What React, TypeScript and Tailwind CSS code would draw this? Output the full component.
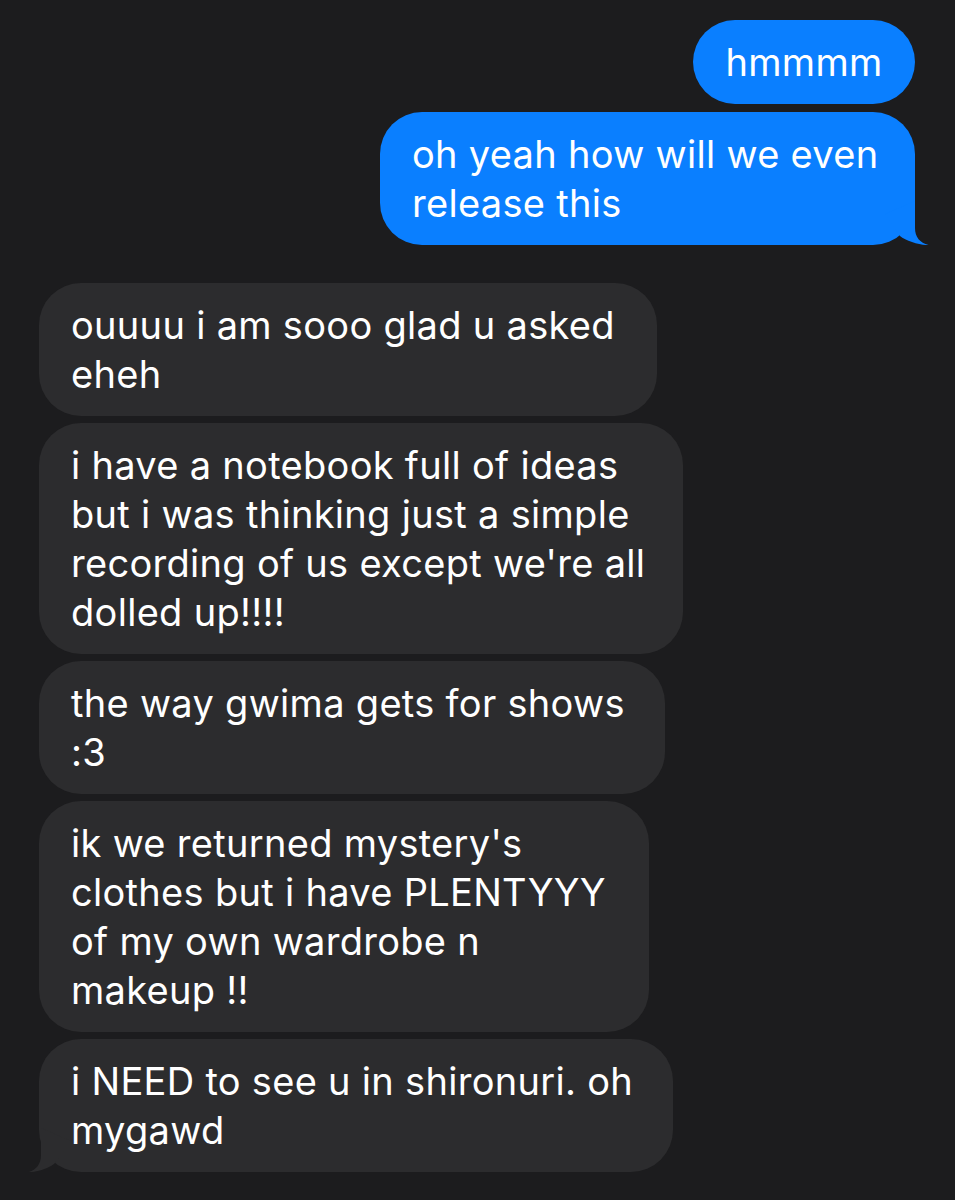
const BLUE = "#0a7fff";

type Msg = { lines: string[]; w: string; tail?: boolean };

const sent: Msg[] = [
  { lines: ["hmmmm"], w: "w-[222px]" },
  { lines: ["oh yeah how will we even", "release this"], w: "w-[535px]", tail: true },
];

const received: Msg[] = [
  { lines: ["ouuuu i am sooo glad u asked", "eheh"], w: "w-[618px]" },
  {
    lines: [
      "i have a notebook full of ideas",
      "but i was thinking just a simple",
      "recording of us except we're all",
      "dolled up!!!!",
    ],
    w: "w-[644px]",
  },
  { lines: ["the way gwima gets for shows", ":3"], w: "w-[626px]" },
  {
    lines: [
      "ik we returned mystery's",
      "clothes but i have PLENTYYY",
      "of my own wardrobe n",
      "makeup !!",
    ],
    w: "w-[610px]",
  },
  { lines: ["i NEED to see u in shironuri. oh", "mygawd"], w: "w-[634px]", tail: true },
];

const TailRight = () => (
  <svg
    className="absolute right-[-14px] bottom-0"
    width="56"
    height="44"
    viewBox="-42 -43 56 44"
  >
    <path d="M0 -43 L0 -16 C0 -7 5 -1 13.5 1 C6 1.5 -9 -3 -15 -8 L-30 -30 Z" fill={BLUE} />
  </svg>
);

const TailLeft = () => (
  <svg
    className="absolute left-[-12px] bottom-0"
    width="56"
    height="44"
    viewBox="-14 -43 56 44"
  >
    <path d="M0 -43 L0 -16 C0 -7 -5 -1 -12 1 C-5 1.5 9 -3 14 -8 L30 -30 Z" fill="#2c2c2e" />
  </svg>
);

const Bubble = ({ m, mine }: { m: Msg; mine: boolean }) => (
  <div
    className={`relative ${m.w} rounded-[42px] px-8 py-[17.5px] text-[38px] leading-[49px] tracking-[0.3px] text-white whitespace-nowrap ${
      mine ? "bg-[#0a7fff]" : "bg-[#2c2c2e]"
    } ${m.lines.length === 1 && mine ? "text-center px-0" : ""}`}
  >
    {m.lines.map((l, i) => (
      <div key={i}>{l}</div>
    ))}
    {m.tail && (mine ? <TailRight /> : <TailLeft />)}
  </div>
);

export default function App() {
  return (
    <div
      className="w-[955px] h-[1200px] bg-[#1c1c1e] overflow-hidden pt-5"
      style={{ fontFamily: "Inter, 'Noto Sans', sans-serif" }}
    >
      <div className="flex flex-col items-end gap-2 pr-10">
        {sent.map((m, i) => (
          <Bubble key={i} m={m} mine />
        ))}
      </div>
      <div className="flex flex-col items-start gap-[7px] pl-[39px] mt-[38px]">
        {received.map((m, i) => (
          <Bubble key={i} m={m} mine={false} />
        ))}
      </div>
    </div>
  );
}
